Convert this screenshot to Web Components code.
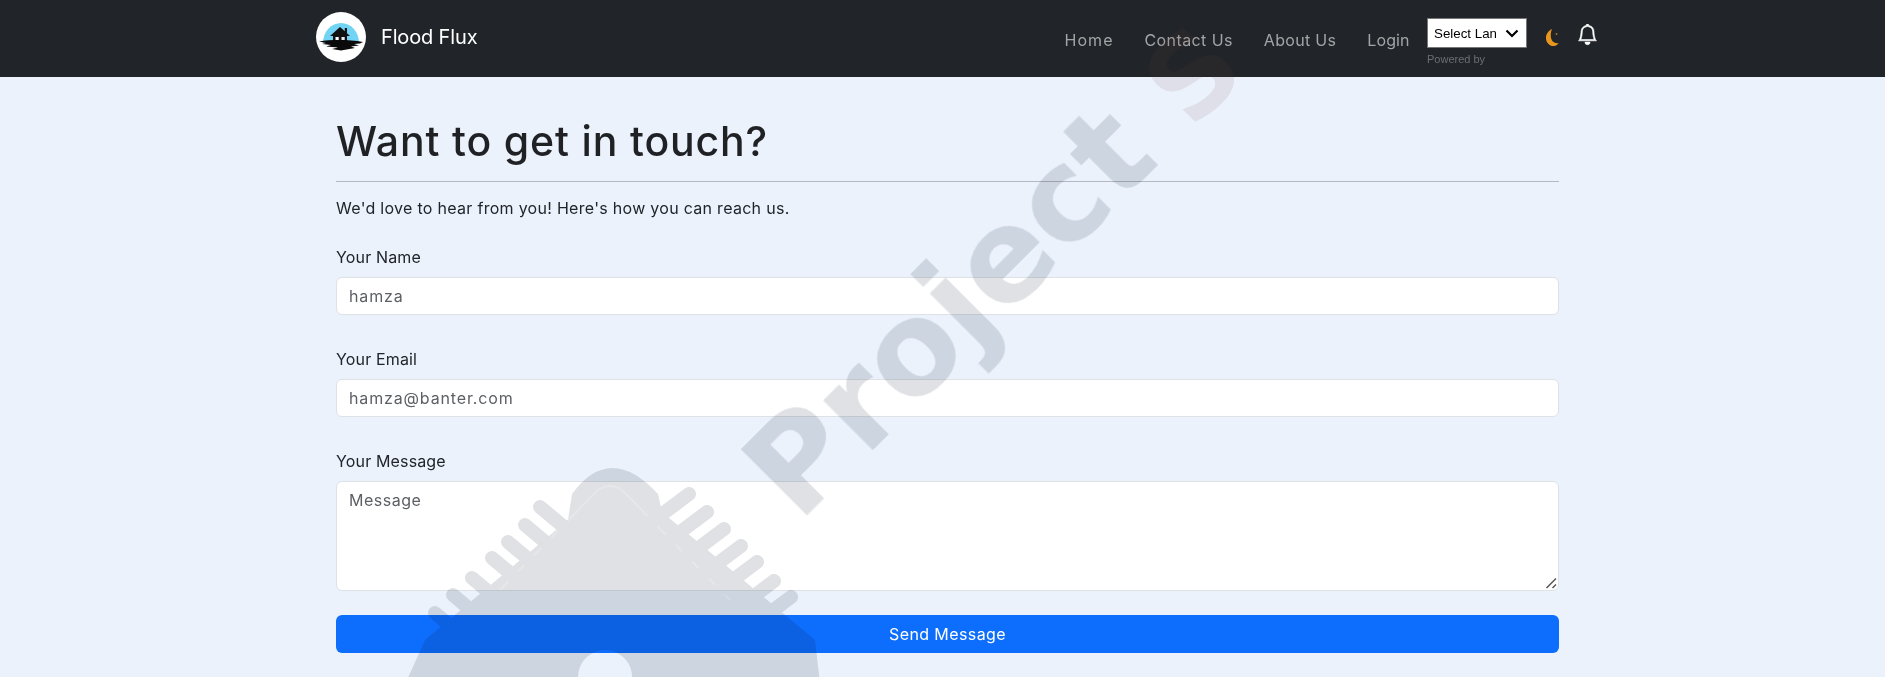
<!DOCTYPE html>
<html><head><meta charset="utf-8"><style>
html,body{margin:0;height:677px;overflow:hidden;background:#ebf2fc;font-family:Inter,"Liberation Sans",sans-serif}
body{position:relative}
</style></head><body>
<ff-navbar>
  <ff-logo slot="logo"></ff-logo>
  <span slot="brand">Flood Flux</span>
</ff-navbar>
<ff-contact></ff-contact>
<ff-watermark></ff-watermark>
<script>
function shell(cls,name,html){
  customElements.define(name,class extends HTMLElement{
    constructor(){super();this.attachShadow({mode:'open'}).innerHTML=html;}
  });
}
shell(0,'ff-logo',`<style>:host{display:block;width:50px;height:50px}svg{display:block}</style>
<svg width="50" height="50" viewBox="0 0 50 50">
<circle cx="25" cy="25" r="25" fill="#fff"/>
<path d="M7 31a18 20 0 0 1 36 0z" fill="#72d4f4"/>
<path d="M24 15l-10 9h3v6h14v-6h3l-3-2.700V16h-2.200v3.300z" fill="#111"/>
<rect x="19.500" y="25" width="3.200" height="3.500" fill="#fff"/><rect x="25.500" y="25" width="3.200" height="3.500" fill="#e8e8e8"/>
<path d="M3 29.500c12-2 30-2 44 .5l-3 1.500-6 .5 5 1.500-8 1 4 1.500-14 2.500-9-1.500 6-1.500-12-1 5-1.500-9-1 4-1z" fill="#0a0a0a"/>
</svg>`);
customElements.define('ff-nav-link',class extends HTMLElement{
  constructor(){super();this.attachShadow({mode:'open'}).innerHTML=`<style>:host{display:block;font-size:16px;color:#a3a4a5;line-height:24px;white-space:nowrap}</style><slot></slot>`;}
});
shell(0,'ff-lang',`<style>:host{display:block;width:100px;font-family:"Liberation Sans",Arial,sans-serif}
.w{position:relative;height:30px}
select{display:block;box-sizing:border-box;height:30px;width:100px;background:#fff;border:1px solid #767676;border-radius:0;color:#000;font:13.333px "Liberation Sans",Arial,sans-serif;margin:0;padding:0 30px 0 6px;appearance:none;-webkit-appearance:none}
svg{position:absolute;right:8px;top:11px;pointer-events:none}
.p{margin-top:5px;font-size:11px;line-height:13px;color:#6b6f72}
</style><div class="w"><select><option>Select Language</option></select><svg width="14" height="9" viewBox="0 0 14 9"><path d="M1.500 1.500L7 7l5.500-5.500" fill="none" stroke="#000" stroke-width="2.200"/></svg></div><div class="p">Powered by</div>`);
shell(0,'ff-navbar',`<style>
:host{display:flex;box-sizing:border-box;height:77px;background:#212529;padding:12px 0 0 316px;align-items:flex-start}
.brand{display:flex;align-items:center;gap:15px;color:#fff;font-size:20px;letter-spacing:-.15px;height:50px;width:176px}
nav{margin-left:572.500px;display:flex;gap:31px;padding-top:16px;width:347px}
ff-lang{margin:6px 0 0 15.500px}
.moon{margin:16px 0 0 18px;display:block}
.bell{margin:12px 0 0 16px;display:block}
</style>
<div class="brand"><slot name="logo"></slot><slot name="brand"></slot></div>
<nav><ff-nav-link style="letter-spacing:1.050px">Home</ff-nav-link><ff-nav-link style="letter-spacing:.4px">Contact Us</ff-nav-link><ff-nav-link style="letter-spacing:.3px">About Us</ff-nav-link><ff-nav-link style="letter-spacing:.15px">Login</ff-nav-link></nav>
<ff-lang></ff-lang>
<svg class="moon" width="16" height="20" viewBox="0 0 16 20"><path d="M7 1C3 3 .8 6.500 1 10.500c.2 4.500 4 8 8 7.500 2-.2 3.800-1.500 4.800-3-3.800 1-7-1.500-7.800-5C5.500 7 5.800 3.500 7 1z" fill="#e8961e"/><circle cx="11.500" cy="6" r="1" fill="#a8741e"/></svg>
<svg class="bell" width="21" height="22" viewBox="0 0 16 17"><path fill="#fff" stroke="#fff" stroke-width=".45" d="M8 16a2 2 0 0 0 2-2H6a2 2 0 0 0 2 2zM8 1.918l-.797.161A4.002 4.002 0 0 0 4 6c0 .628-.134 2.197-.459 3.742-.16.767-.376 1.566-.663 2.258h10.244c-.287-.692-.502-1.490-.663-2.258C12.134 8.197 12 6.628 12 6a4.002 4.002 0 0 0-3.203-3.920L8 1.917zM14.220 12c.223.447.481.801.780 1H1c.299-.199.557-.553.780-1C2.680 10.200 3 6.880 3 6c0-2.420 1.720-4.440 4.005-4.901a1 1 0 1 1 1.990 0A5.002 5.002 0 0 1 13 6c0 .880.320 4.200 1.220 6z"/></svg>`);
customElements.define('ff-field',class extends HTMLElement{
  constructor(){super();this.attachShadow({mode:'open'}).innerHTML=`<style>
:host{display:block;font-size:16px;color:#212529}
label{display:block;line-height:24px;margin-bottom:8px;letter-spacing:.15px}
.c{box-sizing:border-box;background:#fff;border:1px solid #dee2e6;border-radius:6px;padding:6px 12px;line-height:24px;color:#5c5f63;letter-spacing:.85px;position:relative}
:host([area]) .c{height:110px;letter-spacing:.5px}
:host(:not([area])) .c{height:38px}
svg{position:absolute;right:1px;bottom:1px}
</style><label></label><div class="c"></div>`;
  }
  connectedCallback(){
    const r=this.shadowRoot;
    r.querySelector('label').textContent=this.getAttribute('label');
    r.querySelector('.c').textContent=this.getAttribute('value');
    if(this.hasAttribute('area')) r.querySelector('.c').insertAdjacentHTML('beforeend','<svg width="12" height="12" viewBox="0 0 12 12"><path d="M1.500 11L11 1.500M7.500 11L11 7.500" stroke="#555" stroke-width="1.500"/></svg>');
  }
});
shell(0,'ff-contact',`<style>
:host{display:block;box-sizing:border-box;width:1559px;padding:40px 0 0 336px;color:#212529}
h1{margin:0;font-size:41px;font-weight:500;line-height:48px;letter-spacing:.85px;color:#1f2124}
hr{margin:16px 0 0;border:0;height:1px;background:#b4b8c3}
p{margin:14px 0 0;font-size:16px;line-height:24px;letter-spacing:.29px}
.f{display:flex;flex-direction:column;gap:32px;margin-top:25px}
button{display:block;width:100%;height:38px;margin-top:24px;background:#0d6efd;color:#fff;border:0;border-radius:6px;font:inherit;font-size:16px;letter-spacing:.4px}
</style>
<h1>Want to get in touch?</h1><hr>
<p>We'd love to hear from you! Here's how you can reach us.</p>
<div class="f">
<ff-field label="Your Name" value="hamza"></ff-field>
<ff-field label="Your Email" value="hamza@banter.com"></ff-field>
<ff-field label="Your Message" value="Message" area></ff-field>
</div>
<button>Send Message</button>`);
(function(){
  const R=[[695,490],[713,508],[730,525],[747,542],[763,558],[780,577],[797,593]];
  const L=[[535,502],[520,520],[503,537],[487,553],[467,573],[448,590],[430,608]];
  let teeth='';
  R.forEach(p=>teeth+=`<line x1="${p[0]-6}" y1="${p[1]+4}" x2="${p[0]-46}" y2="${p[1]+34}"/>`);
  L.forEach(p=>teeth+=`<line x1="${p[0]+5}" y1="${p[1]+5}" x2="${p[0]+42}" y2="${p[1]+36}"/>`);
  shell(0,'ff-watermark',`<style>
:host{position:absolute;left:0;top:0;width:1885px;height:677px;pointer-events:none;overflow:hidden}
svg{display:block;position:absolute;left:0;top:0}
.g{mix-blend-mode:multiply}
.g>*{filter:blur(.6px)}
</style><svg class="g" width="1885" height="677" viewBox="0 0 1885 677">
<path fill="#dfe1e4" fill-rule="evenodd" d="M572 494Q610 442 658 494L662 512 815 640 822 700 398 700 425 640 568 520zM605 650a27 27 0 1 0 .1 0z"/>
<path fill="none" stroke="#e6e7e9" stroke-width="2" d="M500 590L598 490Q610 482 622 490L730 600"/>
<g stroke="#dfe1e4" stroke-width="14" stroke-linecap="round">${teeth}</g>
<text transform="translate(799 524) rotate(-45)" font-family="DejaVu Sans" font-weight="700" font-size="128" fill="#dfe1e4">Project</text>
</svg>
<svg width="1885" height="677" viewBox="0 0 1885 677"><text transform="translate(1192 131) rotate(-45)" font-family="DejaVu Sans" font-weight="700" font-size="112" fill="rgba(110,60,60,.1)">S</text></svg>`);
})();
</script>
</body></html>
